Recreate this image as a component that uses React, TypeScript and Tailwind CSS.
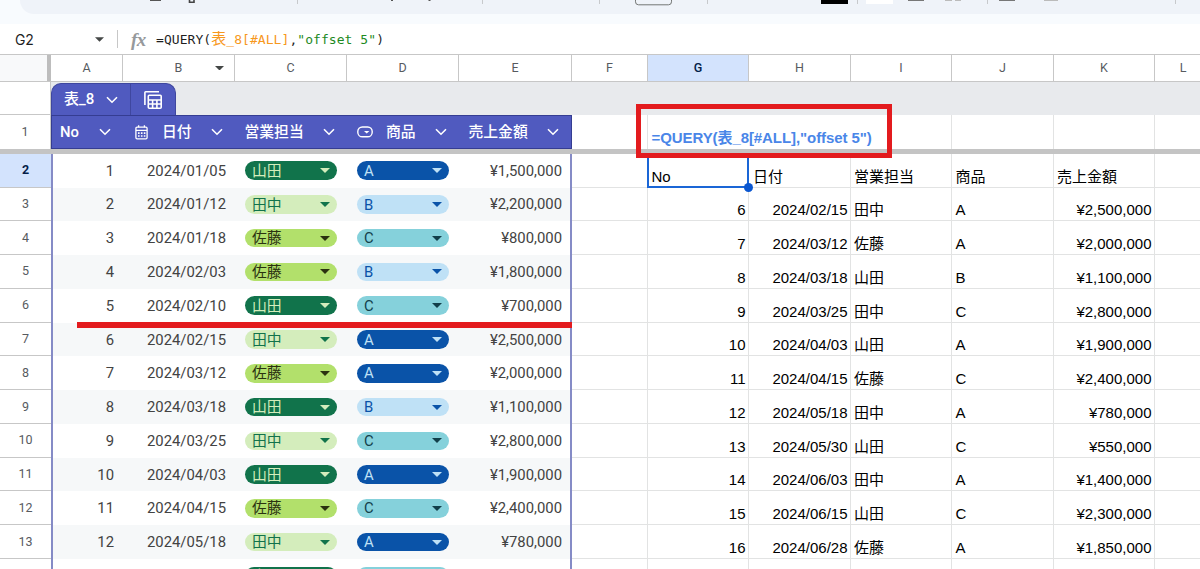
import React from 'react';

type Person = '山田' | '田中' | '佐藤';
type Product = 'A' | 'B' | 'C';

interface Sale {
  no: number;
  date: string;
  person: Person;
  product: Product;
  amount: string;
}

const sales: Sale[] = [
  { no: 1, date: '2024/01/05', person: '山田', product: 'A', amount: '¥1,500,000' },
  { no: 2, date: '2024/01/12', person: '田中', product: 'B', amount: '¥2,200,000' },
  { no: 3, date: '2024/01/18', person: '佐藤', product: 'C', amount: '¥800,000' },
  { no: 4, date: '2024/02/03', person: '佐藤', product: 'B', amount: '¥1,800,000' },
  { no: 5, date: '2024/02/10', person: '山田', product: 'C', amount: '¥700,000' },
  { no: 6, date: '2024/02/15', person: '田中', product: 'A', amount: '¥2,500,000' },
  { no: 7, date: '2024/03/12', person: '佐藤', product: 'A', amount: '¥2,000,000' },
  { no: 8, date: '2024/03/18', person: '山田', product: 'B', amount: '¥1,100,000' },
  { no: 9, date: '2024/03/25', person: '田中', product: 'C', amount: '¥2,800,000' },
  { no: 10, date: '2024/04/03', person: '山田', product: 'A', amount: '¥1,900,000' },
  { no: 11, date: '2024/04/15', person: '佐藤', product: 'C', amount: '¥2,400,000' },
  { no: 12, date: '2024/05/18', person: '田中', product: 'A', amount: '¥780,000' },
  { no: 13, date: '2024/05/30', person: '山田', product: 'C', amount: '¥550,000' },
  { no: 14, date: '2024/06/03', person: '田中', product: 'A', amount: '¥1,400,000' },
  { no: 15, date: '2024/06/15', person: '山田', product: 'C', amount: '¥2,300,000' },
  { no: 16, date: '2024/06/28', person: '佐藤', product: 'A', amount: '¥1,850,000' },
];

const chipColors: Record<Person | Product, string> = {
  山田: 'bg-[#11734b] text-[#d4edbc]',
  田中: 'bg-[#d4edbc] text-[#11734b]',
  佐藤: 'bg-[#b2e06b] text-[#2b3210]',
  A: 'bg-[#0a53a8] text-[#bfe1f6]',
  B: 'bg-[#bfe1f6] text-[#0a53a8]',
  C: 'bg-[#85d1db] text-[#123f4a]',
};

const columns = [
  { name: 'A', width: 'w-[72px]' },
  { name: 'B', width: 'w-[112px]' },
  { name: 'C', width: 'w-[112px]' },
  { name: 'D', width: 'w-[112px]' },
  { name: 'E', width: 'w-[113px]' },
  { name: 'F', width: 'w-[76px]' },
  { name: 'G', width: 'w-[101px]' },
  { name: 'H', width: 'w-[102px]' },
  { name: 'I', width: 'w-[101px]' },
  { name: 'J', width: 'w-[102px]' },
  { name: 'K', width: 'w-[101px]' },
  { name: 'L', width: 'w-[57px]' },
];

const roboto = "font-[Roboto,'Noto_Sans_CJK_JP',sans-serif]";
const arial = "font-['Liberation_Sans','Noto_Sans_CJK_JP',sans-serif]";

const Triangle = ({ className = 'h-[5px] w-[10px]' }: { className?: string }) => (
  <svg viewBox="0 0 10 5" className={`shrink-0 ${className}`} fill="currentColor">
    <path d="M0 0h10L5 5z" />
  </svg>
);

const Chevron = ({ className = '' }: { className?: string }) => (
  <svg viewBox="0 0 12 8" className={`h-[8px] w-[12px] shrink-0 ${className}`} fill="none" stroke="currentColor" strokeWidth="1.6">
    <path d="M1 1.2l5 5 5-5" />
  </svg>
);

const TableIcon = () => (
  <svg viewBox="0 0 20 20" className="h-[20px] w-[20px]" fill="none" stroke="currentColor" strokeWidth="1.6">
    <path d="M1.9 15V2.6q0-.8.8-.8H16" />
    <rect x="5.3" y="5.3" width="12.9" height="12.9" rx="1" />
    <path d="M5.3 10h12.9M5.3 14h12.9M9.6 10v8.2M13.9 10v8.2" />
  </svg>
);

const CalendarIcon = () => (
  <svg viewBox="0 0 13 15" className="h-[15px] w-[13px] shrink-0" fill="none" stroke="currentColor" strokeWidth="1.3">
    <rect x="0.9" y="2.2" width="11.2" height="11.6" rx="1.2" />
    <path d="M3.6 0.3v2M9.4 0.3v2M1 5.4h11" />
    <path d="M3 8.1h7.4M3 11h7.4" strokeWidth="1.6" strokeDasharray="1.6 1.3" />
  </svg>
);

const DropdownIcon = () => (
  <svg viewBox="0 0 16 12" className="h-[12px] w-[16px] shrink-0" fill="none" stroke="currentColor" strokeWidth="1.4">
    <rect x="0.8" y="1" width="14.4" height="9.8" rx="4.6" />
    <path d="M7 5h5.4L9.7 7.6z" fill="currentColor" stroke="none" />
  </svg>
);

const Chip = ({ value }: { value: Person | Product }) => (
  <div className={`flex h-[18.5px] w-[91.5px] items-center justify-between rounded-full px-[7px] leading-none ${chipColors[value]}`}>
    <span className="pt-px">{value}</span>
    <Triangle />
  </div>
);

// Lower edge of the toolbar, the icons are scrolled mostly out of view
const Toolbar = () => (
  <div className="h-[24px] bg-[#f8fbfe]">
    <div className="ml-[20px] h-[14px] overflow-hidden rounded-bl-[22px] bg-[#eff3f9]">
      <svg viewBox="20 0 1180 14" className="h-[14px] w-[1180px]">
        <path d="M150 0h11v1h-11z" fill="#555" />
        <path d="M189.5 0v2.2h4.5V0" fill="none" stroke="#444" strokeWidth="1.6" />
        <path d="M297.5 0v4M482.5 0v4M599.5 0v4M707.5 0v4M857.5 0v4M987.5 0v4M1175.5 0v4" stroke="#c7c9cc" />
        <path d="M391 0h2v1h-2zM428.5 0h2v1h-2z" fill="#555" />
        <rect x="635.5" y="-10" width="36" height="14.8" rx="3" fill="none" stroke="#747775" />
        <path d="M821 0h27v4h-27z" fill="#000" />
        <path d="M866 0h27v4h-27z" fill="#fff" />
        <path d="M908 0h16v1h-16zM999 0h16v1h-16z" fill="#777" />
        <path d="M945 0h7v1h-7zM955 0h6v1h-6zM1044 0h14v1h-14z" fill="#bbb" />
      </svg>
    </div>
  </div>
);

const FormulaBar = () => (
  <div className="flex h-[30px] items-center bg-white">
    <div className="w-[80px] pl-[15px] font-[Inter,sans-serif] text-[14px] tracking-[-0.3px] text-[#1f1f1f]">G2</div>
    <Triangle className="ml-[15px] h-[5px] w-[9px] text-[#444746]" />
    <div className="ml-[13px] h-[18px] w-px bg-[#c7c7c7]" />
    <div className="ml-[13px] w-[25px] font-['Liberation_Serif',serif] text-[19px] leading-none font-bold tracking-[-0.5px] text-[#96999c] italic">fx</div>
    <div className="font-['DejaVu_Sans_Mono','Noto_Sans_CJK_JP',monospace] text-[13px] leading-none tracking-[0.06px] whitespace-pre text-[#1f1f1f]">
      =QUERY(<span className="text-[#f7981d]"><span className="text-[15px]">表</span>_8[#ALL]</span>,<span className="text-[#1e8a1e]">"offset 5"</span>)
    </div>
  </div>
);

const ColumnHeaders = () => (
  <div className={`flex h-[28px] border-y border-[#c7c7c7] bg-white text-[12.5px] text-[#575b5f] ${roboto}`}>
    <div className="w-[51px] shrink-0 border-r-4 border-[#bdbdbd] bg-[#f8f9fa]" />
    {columns.map((col) => (
      <div
        key={col.name}
        className={`relative flex shrink-0 items-center justify-center border-r border-[#c7c7c7] ${col.width} ${
          col.name === 'G' ? 'bg-[#d3e3fd] font-medium text-[#041e49]' : ''
        }`}
      >
        {col.name}
        {col.name === 'B' && <Triangle className="absolute right-[10px] h-[4.5px] w-[9px] text-[#444746]" />}
      </div>
    ))}
  </div>
);

const TabRow = () => (
  <div className={`flex h-[33px] bg-[#e8eaed] ${roboto}`}>
    <div className="w-[51px] border-r border-b border-[#c7c7c7] bg-white" />
    <div className="mt-px flex h-[32px] w-[125px] rounded-t-[10px] border border-b-0 border-[#3f479f] bg-[#505abf] text-white">
      <div className="flex w-[79px] items-center border-r border-[#3f479f] pl-[12px] text-[15px] font-medium">
        表_8
        <Chevron className="ml-[12px]" />
      </div>
      <div className="flex flex-1 items-center justify-center">
        <TableIcon />
      </div>
    </div>
  </div>
);

const HeaderRow = () => (
  <div className={`flex h-[34px] bg-white ${roboto}`}>
    <div className="flex w-[51px] shrink-0 items-center justify-center border-r border-[#c7c7c7] text-[12.5px] text-[#575b5f]">1</div>
    <div className="flex w-[521px] shrink-0 items-center border border-[#353d92] bg-[#505abf] text-[14.8px] font-medium text-white">
      <div className="flex w-[71px] items-center justify-between pr-[12px] pl-[8px]">No<Chevron /></div>
      <div className="flex w-[112px] items-center pr-[12px] pl-[12px]">
        <CalendarIcon />
        <span className="ml-[14px]">日付</span>
        <Chevron className="ml-auto" />
      </div>
      <div className="flex w-[112px] items-center justify-between pr-[12px] pl-[9.5px]">営業担当<Chevron /></div>
      <div className="flex w-[112px] items-center pr-[12px] pl-[10px]">
        <DropdownIcon />
        <span className="ml-[13px]">商品</span>
        <Chevron className="ml-auto" />
      </div>
      <div className="flex w-[112px] items-center justify-between pr-[12px] pl-[9.5px]">売上金額<Chevron /></div>
    </div>
    <div className="w-[76px] shrink-0 border-r border-[#e2e3e3]" />
    <div className={`flex w-[304px] shrink-0 items-end border-r border-[#e2e3e3] pb-[1px] pl-[3.5px] text-[15px] leading-[20px] font-bold tracking-[-0.08px] whitespace-nowrap text-[#4a86e8] ${arial}`}>
      =QUERY(表_8[#ALL],"offset 5")
    </div>
    <div className="w-[102px] shrink-0 border-r border-[#e2e3e3]" />
    <div className="w-[101px] shrink-0 border-r border-[#e2e3e3]" />
  </div>
);

const resultCell = 'flex shrink-0 items-end border-r border-b border-[#e2e3e3] pr-[2.5px] whitespace-nowrap';

const SheetRow = ({ index }: { index: number }) => {
  const sale = sales[index];
  // The query result starts with its header in row 2, then skips five records
  const result = index > 0 && index < 12 ? sales[index + 4] : undefined;
  const isHeader = index === 0;

  return (
    <div className={`flex h-[33.77px] shrink-0 text-[15px] leading-[20px] ${roboto}`}>
      <div
        className={`flex w-[51px] shrink-0 items-center justify-center border-b border-[#c7c7c7] text-[12.5px] ${
          isHeader ? 'bg-[#d3e3fd] font-bold text-[#041e49]' : 'bg-white text-[#575b5f]'
        }`}
      >
        {index + 2}
      </div>
      <div
        className={`flex w-[521px] shrink-0 items-center border-x-2 border-[#858bc6] text-[14.85px] text-[#434343] ${
          index % 2 ? 'bg-[#f6f8f9]' : 'bg-white'
        }`}
      >
        <div className="w-[70px] pr-[9px] text-right">{sale.no}</div>
        <div className="w-[112px] pr-[9px] text-right">{sale.date}</div>
        <div className="w-[112px] pl-[10px]"><Chip value={sale.person} /></div>
        <div className="w-[112px] pl-[10px]"><Chip value={sale.product} /></div>
        <div className="w-[111px] pr-[8px] text-right">{sale.amount}</div>
      </div>
      <div className={`flex text-black ${arial}`}>
        <div className={`${resultCell} w-[76px]`} />
        <div className={`${resultCell} relative w-[101px] ${isHeader ? 'pl-[3.5px]' : 'justify-end'}`}>
          {isHeader ? 'No' : result?.no}
          {isHeader && (
            <>
              <div className="absolute -inset-y-px -right-px -left-[1.5px] border-2 border-[#1a66d6]" />
              <div className="absolute -right-[5px] -bottom-[5px] z-10 h-[9px] w-[9px] rounded-full bg-[#0b57d0]" />
            </>
          )}
        </div>
        <div className={`${resultCell} w-[102px] ${isHeader ? 'pl-[4px]' : 'justify-end'}`}>{isHeader ? '日付' : result?.date}</div>
        <div className={`${resultCell} w-[101px] pl-[3px]`}>{isHeader ? '営業担当' : result?.person}</div>
        <div className={`${resultCell} w-[102px] pl-[3.5px]`}>{isHeader ? '商品' : result?.product}</div>
        <div className={`${resultCell} w-[101px] ${isHeader ? 'pl-[3px]' : 'justify-end'}`}>{isHeader ? '売上金額' : result?.amount}</div>
        <div className={`${resultCell} w-[57px]`} />
      </div>
    </div>
  );
};

const App: React.FC = () => {
  return (
    <div className="relative h-[569px] w-[1200px] overflow-hidden bg-white">
      <Toolbar />
      <FormulaBar />
      <ColumnHeaders />
      <TabRow />
      <HeaderRow />
      {/* Frozen row divider */}
      <div className="h-[4.8px] bg-[#c4c4c4]" />
      <div className="flex flex-col">
        {sales.slice(0, 13).map((sale, i) => (
          <SheetRow key={sale.no} index={i} />
        ))}
      </div>

      {/* Annotations */}
      <div className="absolute top-[104px] left-[636px] z-20 h-[54px] w-[256px] border-[5.5px] border-[#e31b1e]" />
      <div className="absolute top-[322px] left-[77px] z-20 h-[6px] w-[495px] bg-[#e31b1e]" />
    </div>
  );
};

export default App;
